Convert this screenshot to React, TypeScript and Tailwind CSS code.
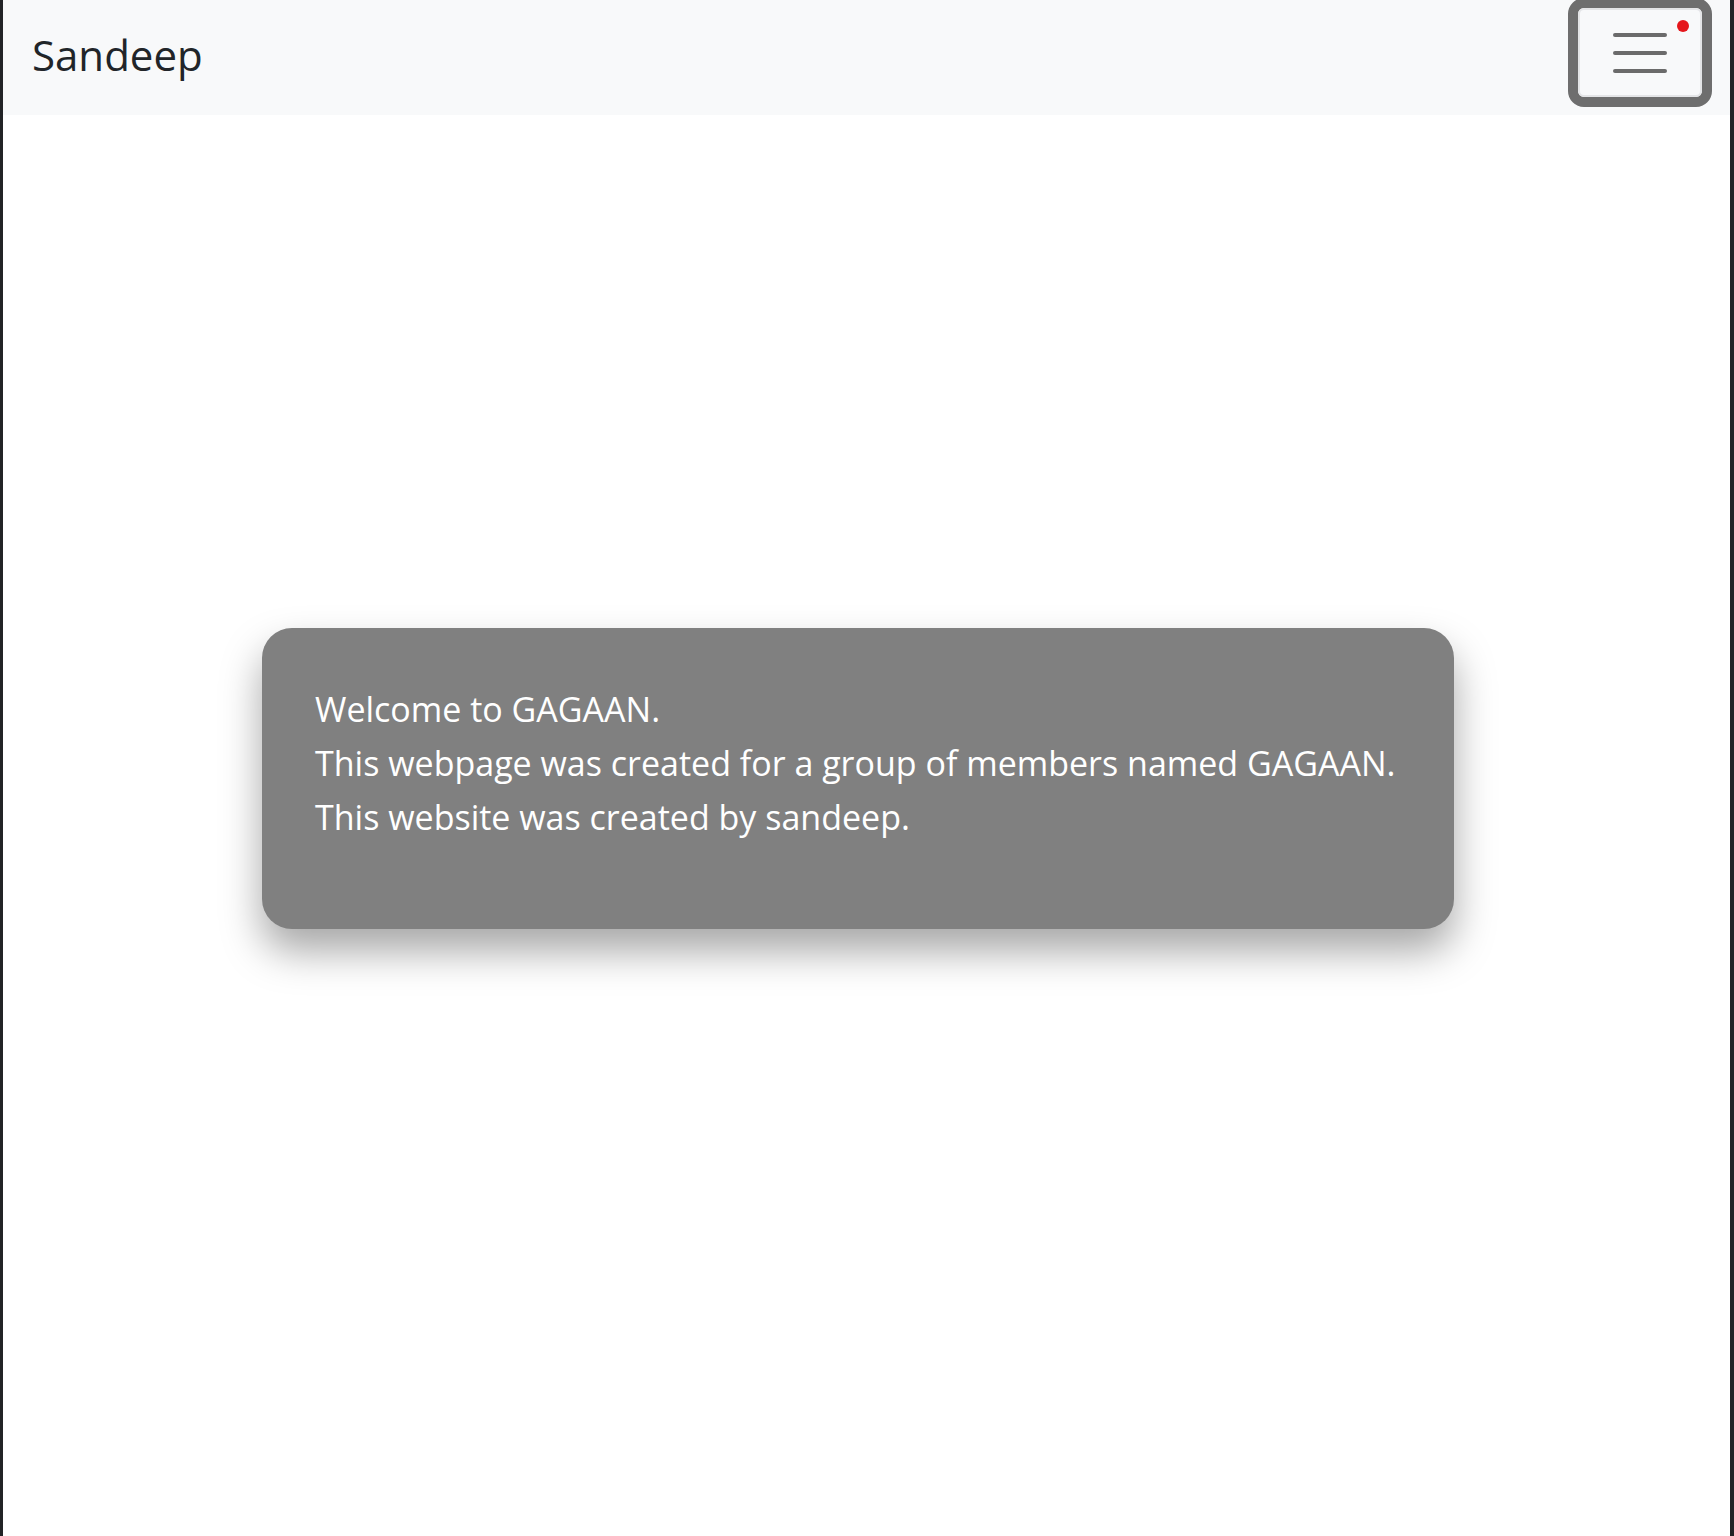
export default function App() {
  return (
    <div
      className="min-h-screen bg-white border-l-[3px] border-r-[4px] border-[#222326]"
      style={{ fontFamily: '"Open Sans", "Noto Sans", sans-serif' }}
    >
      {/* Navbar */}
      <nav className="h-[115px] bg-[#f8f9fa] flex items-start justify-between">
        <a className="mt-[21px] ml-[29px] text-[42px] leading-[68px] text-[#212529]">Sandeep</a>
        <button className="relative mt-[-2px] mr-[18px] w-[144px] h-[109px] rounded-[16px] border-[10px] border-[#6e6e6e] bg-[#f8f9fa] flex items-center justify-center">
          <span className="absolute inset-0 rounded-[6px] border-2 border-[#e4e5e7]" />
          <span className="flex flex-col gap-[14px]">
            <span className="block w-[54px] h-[4px] rounded-full bg-[#6b6b6b]" />
            <span className="block w-[54px] h-[4px] rounded-full bg-[#6b6b6b]" />
            <span className="block w-[54px] h-[4px] rounded-full bg-[#6b6b6b]" />
          </span>
          <span className="absolute top-[12px] right-[13px] w-[12px] h-[12px] rounded-full bg-[#e5161b]" />
        </button>
      </nav>

      {/* Card */}
      <main className="pt-[513px] pl-[259px]">
        <div className="w-[1192px] h-[301px] rounded-[30px] bg-[#808080] px-[53px] pt-[54px] shadow-[0_22px_40px_rgba(0,0,0,0.35)]">
          <p className="text-[34px] leading-[54px] text-white whitespace-nowrap">
            Welcome to GAGAAN.
            <br />
            This webpage was created for a group of members named GAGAAN.
            <br />
            This website was created by sandeep.
          </p>
        </div>
      </main>
    </div>
  );
}
